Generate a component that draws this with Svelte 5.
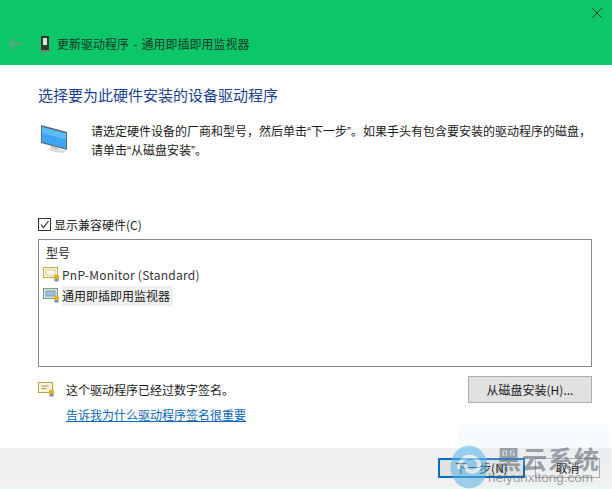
<script>
  const models = [
    { name: 'PnP-Monitor (Standard)', selected: false },
    { name: '通用即插即用监视器', selected: true }
  ];
</script>

<div class="window">
  <header class="top">
    <button class="close" aria-label="关闭">
      <svg width="12" height="12" viewBox="0 0 12 12"><path d="M1 1l10 10M11 1L1 11" stroke="#0c3d26" stroke-width="1" fill="none"/></svg>
    </button>
    <div class="titlebar">
      <svg class="back" width="16" height="12" viewBox="0 0 16 12"><path d="M7 1L2 6l5 5M2 6h12" stroke="#5aa77f" stroke-width="2" fill="none"/></svg>
      <svg class="device" width="10" height="16" viewBox="0 0 10 16">
        <rect x="1" y="0" width="8" height="15" fill="#2f3b36"/>
        <rect x="3" y="2" width="4" height="7" fill="#d9e6df"/>
        <rect x="0" y="14" width="10" height="2" fill="#76857c"/>
      </svg>
      <span class="title-text">更新驱动程序 - 通用即插即用监视器</span>
    </div>
  </header>

  <main class="content">
    <h1>选择要为此硬件安装的设备驱动程序</h1>

    <div class="intro">
      <svg class="monitor" width="28" height="30" viewBox="0 0 28 30">
        <path d="M1 1l26 7v18L1 19z" fill="#5a6a78"/>
        <path d="M2 3l24 6.500v15L2 18z" fill="#3ea5f2"/>
        <path d="M2 3l24 6.500v6L2 9z" fill="#5cbcf7"/>
        <path d="M11 22l8 2v2l-8-2z" fill="#b8bfc5"/>
        <path d="M7 25l6-1 13 3-3 2-8-1z" fill="#d8dcdf"/>
      </svg>
      <p>请选定硬件设备的厂商和型号，然后单击<span class="q">“</span>下一步<span class="q">”</span>。如果手头有包含要安装的驱动程序的磁盘，<br>请单击<span class="q">“</span>从磁盘安装<span class="q">”</span>。</p>
    </div>

    <label class="check">
      <span class="box">
        <svg width="11" height="11" viewBox="0 0 11 11"><path d="M2 5.500l2.500 3L9.500 2" stroke="#222" stroke-width="1.100" fill="none"/></svg>
      </span>
      显示兼容硬件(C)
    </label>

    <section class="list">
      <div class="list-head">型号</div>
      {#each models as m}
        <div class="row">
          <svg class="cert" width="18" height="15" viewBox="0 0 18 15">
            <rect x="0.500" y="0.500" width="14" height="10" fill={m.selected ? '#cfe3d8' : '#fbf3d4'} stroke={m.selected ? '#7f9a86' : '#c5ad55'}/>
            <rect x="3" y="3" width="9" height="5" fill={m.selected ? '#9fc0dc' : '#fffdf3'} stroke={m.selected ? '#6f8ba5' : '#c9b878'} stroke-width="0.700"/>
            <circle cx="13.500" cy="10" r="2.600" fill="#e9ac1c"/>
            <rect x="11.500" y="12" width="4" height="2.500" fill="#6f93b8"/>
          </svg>
          <span class="name" class:sel={m.selected}>{m.name}</span>
        </div>
      {/each}
    </section>

    <div class="sign">
      <div class="sign-text">
        <div class="signed">
          <svg width="18" height="15" viewBox="0 0 18 15">
            <rect x="0.500" y="0.500" width="14" height="10" fill="#fbf3d4" stroke="#b9a24d"/>
            <path d="M3.500 4h7M3.500 6.500h5" stroke="#a39a80" stroke-width="1"/>
            <circle cx="13.500" cy="10" r="2.600" fill="#e9ac1c"/>
            <rect x="11.500" y="12" width="4" height="2.500" fill="#6f93b8"/>
          </svg>
          <span>这个驱动程序已经过数字签名。</span>
        </div>
        <a href="#why" class="why">告诉我为什么驱动程序签名很重要</a>
      </div>
      <button class="btn disk">从磁盘安装(H)...</button>
    </div>
  </main>

  <footer class="foot">
    <button class="btn next">下一步(N)</button>
    <button class="btn cancel">取消</button>
  </footer>

  <div class="wash"></div>
  <div class="mark">
    <svg class="swirl" width="38" height="44" viewBox="0 0 38 44">
      <ellipse cx="19" cy="22" rx="18.500" ry="21.500" fill="#55b4e8"/>
      <path d="M9 24c0-8 6-13 13-12 5 1 8 5 7 9-1 5-6 7-10 5-3-1-4-4-2-6" fill="none" stroke="#dff1fb" stroke-width="4"/>
    </svg>
    <div class="mark-text">
      <div class="mark-cn">黑云系统</div>
      <div class="mark-en">heiyunxitong.com</div>
    </div>
  </div>
</div>

<style>
  :global(body) {
    margin: 0;
    background: #e8fbf4;
  }
  .window {
    position: relative;
    width: 612px;
    height: 489px;
    overflow: hidden;
    display: flex;
    flex-direction: column;
    font-family: "Noto Sans CJK SC", "Noto Sans", sans-serif;
    font-size: 12px;
    color: #1a1a1a;
  }
  .top {
    position: relative;
    height: 65px;
    flex: none;
    background: #0bc76a;
    display: flex;
    align-items: flex-end;
  }
  .close {
    position: absolute;
    top: 7px;
    right: 9px;
    padding: 0;
    border: 0;
    background: none;
    display: flex;
  }
  .titlebar {
    height: 44px;
    padding: 2px 0 0 8px;
    display: flex;
    align-items: center;
    box-sizing: border-box;
    color: #123524;
    line-height: 1;
  }
  .title-text { word-spacing: 1.500px; }
  .back { margin-right: 16px; }
  .device { margin-right: 7px; }
  .content {
    flex: none;
    height: 383px;
    box-sizing: border-box;
    padding: 19px 20px 0 38px;
    background: #fff;
    display: flex;
    flex-direction: column;
  }
  h1 {
    margin: 0;
    font-size: 15px;
    font-weight: 400;
    line-height: 22px;
    color: #1c3f94;
  }
  .intro {
    display: flex;
    margin-top: 16px;
  }
  .monitor {
    flex: none;
    margin: 2px 0 0 2px;
  }
  .intro p {
    margin: 0 0 0 23px;
    line-height: 18px;
    white-space: nowrap;
  }
  .q { font-family: "Liberation Sans", sans-serif; }
  .check {
    display: flex;
    align-items: center;
    gap: 3px;
    margin-top: 55px;
    height: 18px;
    color: #222;
  }
  .box {
    width: 11px;
    height: 11px;
    border: 1px solid #333;
    background: #fff;
    display: flex;
  }
  .list {
    margin-top: 6px;
    height: 128px;
    box-sizing: border-box;
    border: 1px solid #8a8a8a;
    padding: 3px 0 0 4px;
  }
  .list-head {
    line-height: 20px;
    margin: 0 0 1px 3px;
  }
  .row {
    display: flex;
    align-items: center;
    height: 21px;
  }
  .cert { flex: none; margin-right: 1px; }
  .name {
    padding: 0 3px 0 0;
    line-height: 20px;
    color: #333;
    letter-spacing: 0.250px;
  }
  .name.sel {
    background: #f0f0f0;
    color: #1a1a1a;
    letter-spacing: 0;
  }
  .sign {
    display: flex;
    justify-content: space-between;
    margin-top: 9px;
  }
  .sign-text { padding-top: 4px; }
  .signed {
    display: flex;
    align-items: center;
    height: 18px;
  }
  .signed span { margin-left: 10px; }
  .why {
    display: block;
    margin: 8px 0 0 28px;
    line-height: 18px;
    color: #0a66b8;
    text-decoration: underline;
  }
  .btn {
    font: inherit;
    color: #1a1a1a;
    padding: 0;
    border: 1px solid #adadad;
    background: #e1e1e1;
    line-height: 1;
  }
  .disk {
    width: 124px;
    height: 27px;
  }
  .foot {
    height: 39px;
    flex: none;
    box-sizing: border-box;
    background: #f0f0f0;
    padding: 10px 12px 0 438px;
    display: flex;
    gap: 10px;
    align-items: flex-start;
  }
  .next {
    width: 87px;
    height: 20px;
    border: 2px solid #0f6cbd;
  }
  .cancel {
    width: 65px;
    height: 20px;
    background: none;
    border-color: #a9a9a9;
  }
  .wash {
    position: absolute;
    left: 459px;
    top: 425px;
    width: 150px;
    height: 40px;
    background: rgba(214, 232, 244, 0.18);
    pointer-events: none;
  }
  .mark {
    position: absolute;
    left: 450px;
    top: 445px;
    display: flex;
    gap: 8px;
    opacity: 0.55;
  }
  .mark-text {
    display: flex;
    flex-direction: column;
    color: #55606a;
  }
  .mark-cn {
    font-size: 25px;
    font-weight: 700;
    line-height: 26px;
    letter-spacing: 1px;
  }
  .mark-en {
    font-family: "Liberation Sans", sans-serif;
    font-size: 13.500px;
    line-height: 14px;
    margin-left: -8px;
  }
</style>
